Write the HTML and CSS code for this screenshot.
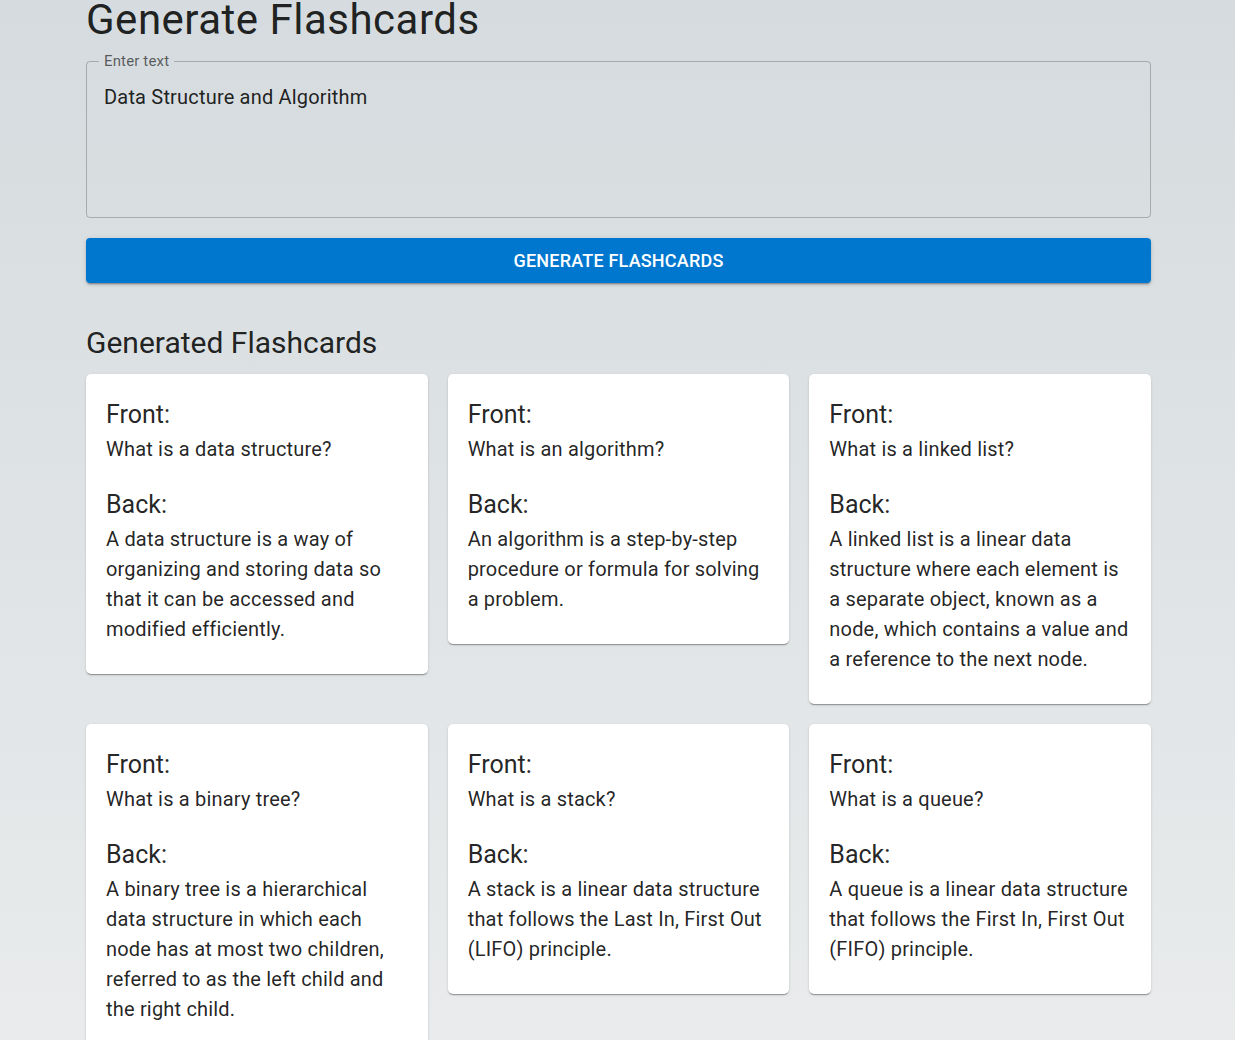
FILE: index.html
```html
<!DOCTYPE html>
<html lang="en">
<head>
<meta charset="utf-8">
<title>Generate Flashcards</title>
<link rel="stylesheet" href="styles.css">
</head>
<body>
<main class="container">
  <h1 class="title">Generate Flashcards</h1>
  <fieldset class="field">
    <legend class="field-label">Enter text</legend>
    <div class="field-input">Data Structure and Algorithm</div>
  </fieldset>
  <button class="generate-btn" type="button">Generate Flashcards</button>
  <h2 class="subtitle">Generated Flashcards</h2>
  <div class="grid">
    <div class="card">
      <h3 class="card-head">Front:</h3>
      <p class="card-text q">What is a data structure?</p>
      <h3 class="card-head">Back:</h3>
      <p class="card-text">A data structure is a way of organizing and storing data so that it can be accessed and modified efficiently.</p>
    </div>
    <div class="card">
      <h3 class="card-head">Front:</h3>
      <p class="card-text q">What is an algorithm?</p>
      <h3 class="card-head">Back:</h3>
      <p class="card-text">An algorithm is a step-by-step procedure or formula for solving a problem.</p>
    </div>
    <div class="card">
      <h3 class="card-head">Front:</h3>
      <p class="card-text q">What is a linked list?</p>
      <h3 class="card-head">Back:</h3>
      <p class="card-text">A linked list is a linear data structure where each element is a separate object, known as a node, which contains a value and a reference to the next node.</p>
    </div>
    <div class="card">
      <h3 class="card-head">Front:</h3>
      <p class="card-text q">What is a binary tree?</p>
      <h3 class="card-head">Back:</h3>
      <p class="card-text">A binary tree is a hierarchical data structure in which each node has at most two children, referred to as the left child and the right child.</p>
    </div>
    <div class="card">
      <h3 class="card-head">Front:</h3>
      <p class="card-text q">What is a stack?</p>
      <h3 class="card-head">Back:</h3>
      <p class="card-text">A stack is a linear data structure that follows the Last In, First Out (LIFO) principle.</p>
    </div>
    <div class="card">
      <h3 class="card-head">Front:</h3>
      <p class="card-text q">What is a queue?</p>
      <h3 class="card-head">Back:</h3>
      <p class="card-text">A queue is a linear data structure that follows the First In, First Out (FIFO) principle.</p>
    </div>
  </div>
</main>
</body>
</html>
```
FILE: styles.css
```css
html {
  background: linear-gradient(180deg, #d5dbde 0px, #e9ebec 1040px);
  min-height: 100%;
}
body {
  margin: 0;
  font-family: Roboto, "Liberation Sans", Arial, sans-serif;
  color: rgba(0, 0, 0, 0.87);
}
.container {
  width: 1065px;
  margin-left: 86px;
  padding-bottom: 40px;
}
.title {
  margin: -6px 0 0 0;
  font-size: 42px;
  font-weight: 400;
  line-height: 52px;
  letter-spacing: 0.5px;
}
.field {
  margin: 0;
  margin-top: 8px;
  border: 1px solid rgba(0, 0, 0, 0.23);
  border-radius: 4px;
  height: 164px;
  box-sizing: border-box;
  padding: 16px 17px 0 17px;
}
.field-label {
  font-size: 15px;
  letter-spacing: 0.15px;
  color: rgba(0, 0, 0, 0.6);
  padding: 0 5px;
  margin-left: -5px;
  line-height: 15px;
}
.field-input {
  font-size: 20px;
  line-height: 24px;
  letter-spacing: 0.00938em;
  color: rgba(0, 0, 0, 0.87);
}
.generate-btn {
  display: block;
  width: 100%;
  height: 45px;
  margin-top: 20px;
  border: 0;
  border-radius: 4px;
  background: #0077cf;
  color: #fff;
  font-family: Roboto, "Liberation Sans", Arial, sans-serif;
  font-size: 18px;
  font-weight: 500;
  text-transform: uppercase;
  letter-spacing: 0.2px;
  box-shadow: 0 3px 1px -2px rgba(0,0,0,0.2), 0 2px 2px 0 rgba(0,0,0,0.14), 0 1px 5px 0 rgba(0,0,0,0.12);
}
.subtitle {
  margin: 40px 0 0 0;
  font-size: 30px;
  font-weight: 400;
  line-height: 40px;
}
.grid {
  display: grid;
  grid-template-columns: repeat(3, 1fr);
  gap: 20px;
  align-items: start;
  margin-top: 11px;
}
.card {
  background: #fff;
  border-radius: 5px;
  padding: 24px 20px 30px 20px;
  box-shadow: 0 2px 1px -1px rgba(0,0,0,0.2), 0 1px 1px 0 rgba(0,0,0,0.14), 0 1px 3px 0 rgba(0,0,0,0.12);
}
.card-head {
  margin: 0 0 3px 0;
  font-size: 25px;
  font-weight: 400;
  line-height: 33px;
}
.card-text {
  margin: 0;
  font-size: 20px;
  line-height: 30px;
  letter-spacing: 0.00938em;
}
.card-text.q {
  margin-bottom: 24px;
}
```
